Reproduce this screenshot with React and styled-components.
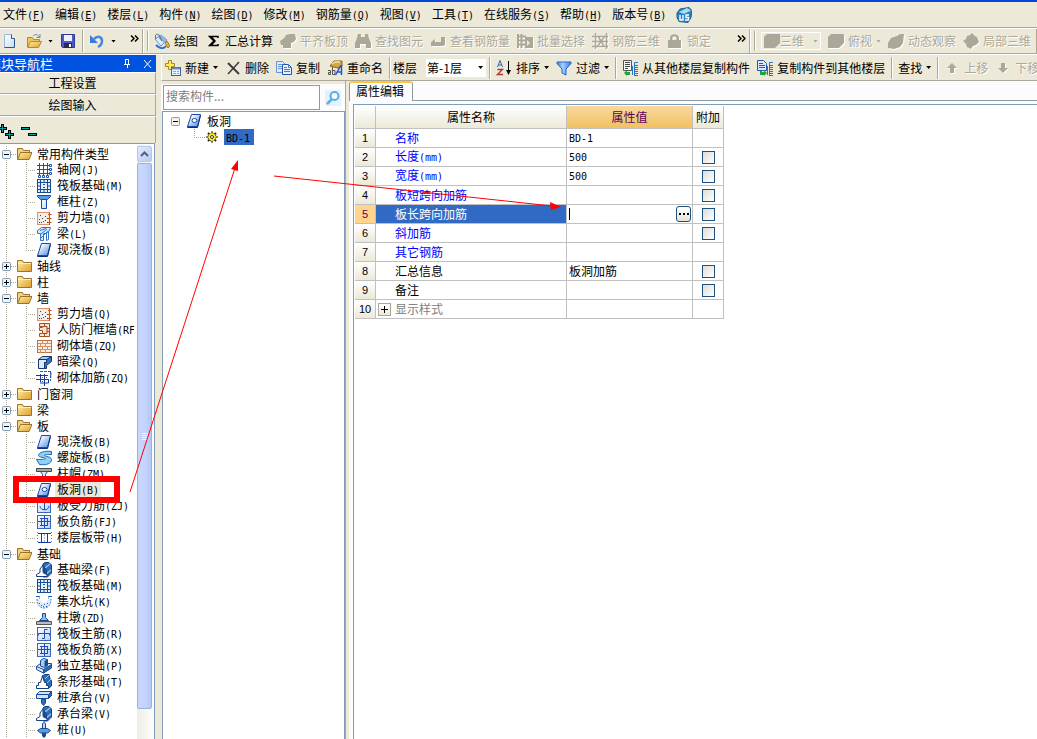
import React, { useState } from 'react';
import styled, { createGlobalStyle, css } from 'styled-components';

const GlobalStyle = createGlobalStyle`
  * {
    box-sizing: border-box;
  }

  body {
    margin: 0;
    overflow: hidden;
    background: #ece9d8;
  }

  body, button, input, select {
    font-family: 'Noto Sans CJK SC', 'Liberation Sans', sans-serif;
    font-size: 12px;
    line-height: 16px;
    color: #000;
  }

  button {
    margin: 0;
    padding: 0;
    border: 0;
    background: none;
  }
`;

const Page = styled.div`
  position: relative;
  display: flex;
  flex-direction: column;
  height: 100vh;
  overflow: hidden;
  border-top: 2px solid #0046d5;
`;

const Mono = styled.span`
  font-family: 'DejaVu Sans Mono', monospace;
  font-size: 10px;
`;

/* ---------- menu bar ---------- */

const MenuBar = styled.nav`
  display: flex;
  align-items: center;
  gap: 10px;
  height: 26px;
  padding-left: 3px;
  border-bottom: 1px solid #aca899;
`;

const MenuItem = styled.button`
  white-space: nowrap;
`;

/* ---------- toolbars ---------- */

const Rebar = styled.div`
  display: flex;
  height: 26px;
  border-top: 1px solid #fff;
  border-bottom: 1px solid #aca899;
`;

const Band = styled.div`
  display: flex;
  align-items: center;
  gap: 1px;
  flex: ${(p) => (p.$grow ? '1' : 'none')};
  min-width: ${(p) => p.$min || 0}px;
  overflow: hidden;
  border-left: 1px solid #fff;
  border-right: 1px solid #aca899;

  &:first-child {
    border-left: 0;
  }
`;

const Grip = styled.span`
  flex: none;
  width: 2px;
  height: 20px;
  margin: 0 1px 0 3px;
  border-left: 1px solid #aca899;
  border-right: 1px solid #fff;
`;

const Separator = styled.span`
  flex: none;
  width: 2px;
  height: 22px;
  margin: 0 1px 0 2px;
  border-left: 1px solid #aca899;
  border-right: 1px solid #fff;
`;

const ToolButton = styled.button`
  display: inline-flex;
  align-items: center;
  flex: none;
  gap: ${(p) => (p.$iconOnly ? 6 : 4)}px;
  height: 22px;
  padding: 0 3px;
  white-space: nowrap;

  &:disabled {
    color: #aca899;
    text-shadow: 1px 1px 0 #fff;
  }

  &:disabled svg {
    filter: drop-shadow(1px 1px 0 #fff);
  }
`;

const Chevron = styled.button`
  flex: none;
  align-self: flex-start;
  width: 9px;
  height: 16px;
  margin: 1px 3px 0 auto;
`;

const Arrow = styled.span`
  flex: none;
  width: 5px;
  height: 3px;
  background: ${(p) => (p.$muted ? '#aca899' : '#000')};
  clip-path: polygon(0 0, 100% 0, 50% 100%);
`;

const Svg = styled.svg`
  display: block;
  flex: none;
`;

const ViewPicker = styled.label`
  display: flex;
  align-items: center;
  flex: none;
  width: 60px;
  height: 18px;
  margin: 0 3px 0 3px;
  padding: 0 2px;
  border: 1px solid #fff;
`;

const PlainSelect = styled.select`
  flex: 1;
  min-width: 0;
  height: 16px;
  padding: 0;
  border: 0;
  background: transparent;
  appearance: none;
  opacity: 1;

  &:disabled {
    color: #aca899;
    text-shadow: 1px 1px 0 #fff;
  }
`;

const FloorLabel = styled.label`
  flex: none;
`;

const FloorBox = styled.span`
  display: flex;
  align-items: center;
  flex: none;
  width: 60px;
  height: 18px;
  margin: 0 0 0 8px;
  padding: 0 3px 0 1px;
  background: #fff;
`;

/* ---------- frame ---------- */

const Body = styled.div`
  display: flex;
  flex: 1;
  min-height: 0;
  border-top: 1px solid #fff;
`;

const NavPane = styled.aside`
  display: flex;
  flex-direction: column;
  flex: none;
  width: 168px;
  margin-left: -12px;
`;

const NavTitle = styled.header`
  display: flex;
  align-items: center;
  gap: 12px;
  height: 17px;
  padding-right: 4px;
  background: #0053e1;
  color: #fff;
  font-size: 13px;
  white-space: nowrap;
`;

const NavTitleText = styled.span`
  flex: 1;
`;

const NavButton = styled.button`
  height: 22px;
  padding-left: 2px;
  border: solid;
  border-width: 1px 1px 1px 0;
  border-color: #fff #aca899 #aca899 #fff;
`;

const NavTools = styled.div`
  display: flex;
  align-items: center;
  gap: 6px;
  height: 27px;
  padding: 2px 0 0 12px;
  border-top: 1px solid #fff;
  border-right: 1px solid #aca899;
`;

const NavTree = styled.div`
  display: flex;
  flex: 1;
  min-height: 0;
  margin-right: 1px;
  padding: 1px 1px 0 12px;
  border-top: 1px solid #7f9db9;
  border-right: 1px solid #7f9db9;
  background: #fff;
`;

const TreeRows = styled.ul`
  flex: 1;
  min-width: 0;
  margin: 0 3px 0 0;
  padding: 1px 0 0;
  overflow: hidden;
  list-style: none;
`;

const dotsDown = 'repeating-linear-gradient(180deg, #aca899 0 1px, transparent 1px 2px)';
const dotsRight = 'repeating-linear-gradient(90deg, #aca899 0 1px, transparent 1px 2px)';

const GroupRow = styled.li`
  display: flex;
  align-items: center;
  height: 16px;
  padding-left: 2px;
  white-space: nowrap;
  background:
    ${dotsDown} 6px 0 / 1px 16px no-repeat,
    ${dotsRight} 11px 8px / 6px 1px no-repeat;
`;

const LeafRow = styled.li`
  display: flex;
  align-items: center;
  height: 16px;
  padding-left: 36px;
  white-space: nowrap;
  background:
    ${dotsDown} 6px 0 / 1px 16px no-repeat,
    ${dotsDown} 26px 0 / 1px ${(p) => (p.$last ? 8 : 16)}px no-repeat,
    ${dotsRight} 26px 8px / 10px 1px no-repeat;
`;

const Expander = styled.button`
  display: block;
  flex: none;
  width: 9px;
  height: 9px;
  margin-right: 5px;
`;

const RowLabel = styled.span`
  margin-left: 3px;
  padding: 0 2px;
  background: ${(p) => (p.$selected ? '#ece9d8' : 'transparent')};
`;

const ScrollBar = styled.div`
  display: flex;
  flex-direction: column;
  flex: none;
  width: 16px;
  background: linear-gradient(90deg, #eeede5, #fefefb);
`;

const ScrollButton = styled.button`
  display: flex;
  align-items: center;
  justify-content: center;
  height: 16px;
  margin: 1px 1px 1px 0;
  border: 1px solid #b4c8f6;
  border-radius: 2px;
  background: linear-gradient(135deg, #e1eafe, #b9cbf3);
`;

const ScrollThumb = styled.div`
  display: flex;
  flex-direction: column;
  align-items: center;
  justify-content: center;
  gap: 1px;
  height: 92%;
  margin-right: 1px;
  border: 1px solid #98b0e8;
  border-radius: 2px;
  background: linear-gradient(90deg, #c9d8fc, #c2d3fd 60%, #b5c7f3);
`;

const ThumbLine = styled.span`
  width: 6px;
  height: 1px;
  background: #eef4fe;
`;

/* ---------- work area ---------- */

const Work = styled.main`
  display: flex;
  flex-direction: column;
  flex: 1;
  min-width: 0;
  margin-left: 5px;
`;

const ActionBar = styled.div`
  display: flex;
  align-items: center;
  gap: 1px;
  height: 26px;
  overflow: hidden;
  border-left: 1px solid #fff;
  border-bottom: 1px solid #aca899;
`;

const Panels = styled.div`
  display: flex;
  flex: 1;
  min-height: 0;
`;

const ListPane = styled.section`
  display: flex;
  flex-direction: column;
  flex: none;
  width: 185px;
  padding-top: 3px;
  border-right: 1px solid #aca899;
`;

const SearchRow = styled.form`
  display: flex;
  align-items: center;
  height: 27px;
  padding-left: 2px;
  background: #fcfcfe;
`;

const SearchInput = styled.input`
  width: 157px;
  height: 25px;
  padding: 0 2px 4px;
  border: 1px solid #7f9db9;
  background: #fff;

  &::placeholder {
    color: #808080;
    opacity: 1;
  }
`;

const SearchButton = styled.button`
  margin-left: 5px;
`;

const PartTree = styled.ul`
  flex: 1;
  margin: 0 0 0 1px;
  padding: 1px 0 0 8px;
  border: 1px solid #7f9db9;
  border-bottom: 0;
  background: #fff;
  list-style: none;
`;

const PartRoot = styled.li`
  display: flex;
  align-items: center;
  height: 16px;
`;

const PartIcon = styled.span`
  margin-left: 1px;
`;

const PartChild = styled.li`
  display: flex;
  align-items: center;
  height: 16px;
  padding-left: 33px;
  background:
    ${dotsDown} 23px 0 / 1px 8px no-repeat,
    ${dotsRight} 23px 8px / 11px 1px no-repeat;
`;

const PartLabel = styled.span`
  height: 16px;
  margin-left: 4px;
  padding: 0 4px 0 2px;
  background: #316ac5;
`;

const EditPane = styled.section`
  display: flex;
  flex-direction: column;
  flex: 1;
  min-width: 0;
  margin-left: 3px;
  background: #fcfcfe;
`;

const TabStrip = styled.div`
  display: flex;
  height: 20px;
  border-bottom: 1px solid #919b9c;
`;

const Tab = styled.button`
  height: 20px;
  padding: 0 8px 2px 6px;
  border: 1px solid #919b9c;
  border-top: 2px solid #ffc73c;
  border-bottom: 0;
  border-radius: 3px 3px 0 0;
  background: #fcfcfe;
`;

const GridFrame = styled.div`
  flex: 1;
  margin: 3px 0 0 4px;
  padding: 1px 0 0 1px;
  border-top: 1px solid #7f9db9;
  border-left: 1px solid #7f9db9;
  background: #fff;
`;

const Grid = styled.table`
  width: 369px;
  table-layout: fixed;
  border-collapse: separate;
  border-spacing: 0;
`;

const cell = css`
  height: 19px;
  padding: 0;
  border-right: 1px solid #c0c0c0;
  border-bottom: 1px solid #c0c0c0;
  font-weight: normal;
  line-height: 16px;
  white-space: nowrap;
`;

const HeadCell = styled.th`
  ${cell}
  width: ${(p) => p.$width}px;
  height: 23px;
  background: ${(p) => (p.$active
    ? 'linear-gradient(#f9d99f, #f1c15f)'
    : 'linear-gradient(#fff, #ece9d8)')};
  color: ${(p) => (p.$active ? '#5c0058' : '#000')};
`;

const NumberCell = styled.th`
  ${cell}
  background: ${(p) => (p.$active ? '#ffd58d' : 'linear-gradient(#fff, #ece9d8)')};
  color: ${(p) => (p.$active ? '#5c0058' : '#000')};
  font-family: 'Liberation Sans', sans-serif;
  font-size: 11px;
`;

const NameCell = styled.td`
  ${cell}
  padding-left: ${(p) => (p.$nested ? 2 : 19)}px;
  background: ${(p) => (p.$active ? '#316ac5' : '#fff')};
  color: ${(p) => p.$color};
`;

const NameInner = styled.div`
  display: flex;
  align-items: center;
  gap: 4px;
`;

const ValueCell = styled.td`
  ${cell}
  padding-left: 2px;
`;

const CheckCell = styled.td`
  ${cell}
  text-align: center;
`;

const Editor = styled.div`
  display: flex;
  align-items: center;
  height: 18px;
  padding-right: 1px;
`;

const Caret = styled.span`
  width: 1px;
  height: 12px;
  background: #000;
`;

const ValueInput = styled.input`
  flex: 1;
  min-width: 0;
  height: 16px;
  padding: 0;
  border: 0;
  outline: 0;
`;

const MoreButton = styled.button`
  display: flex;
  align-items: center;
  justify-content: center;
  gap: 2px;
  width: 15px;
  height: 16px;
  border: 1px solid #1c5180;
  border-radius: 3px;
  background: linear-gradient(#fff, #e6e3da);
`;

const Dot = styled.span`
  width: 2px;
  height: 2px;
  background: #000;
`;

const Check = styled.input`
  display: block;
  width: 13px;
  height: 13px;
  margin: 0 auto;
  appearance: none;
  border: 1px solid #1c5180;
  background: linear-gradient(135deg, #dcdcd7, #fff);

  &:checked {
    background: #1c5180;
  }
`;

const GridExpander = styled.button`
  display: flex;
  width: 13px;
  height: 13px;
  border: 1px solid #aca899;
  background: linear-gradient(#fff, #ece9d8);
`;

/* ---------- annotation ---------- */

const Markup = styled.svg`
  position: absolute;
  top: -2px;
  left: 0;
  pointer-events: none;
`;

/* ---------- icons ---------- */

const blue = '#1c4fb0';
const navy = '#174c94';
const grey = '#aca899';

const slab = (
  <>
    <path d="M5.500 1.500h9l-3 12h-10z" fill="url(#slabFill)" stroke="#1b48a8" />
    <path d="M1.500 13.500v1h10l3-12" stroke="#0d2c86" />
  </>
);

const beam = (
  <>
    <path d="M7 2l2-1.500h4L15.500 3v8l-4 4H7z" fill="#2e6db5" stroke="#123f80" />
    <path d="M9 6l5-4M10 12l5-4" stroke="#8fc2ee" strokeWidth="1.500" />
    <path d="M.5 14.500v-2l3.500-2V7l3-4v7.500l4 2v2z" fill="#fff" stroke="#123f80" />
    <path d="M7 3v8l4 2V8z" fill="#174c94" />
  </>
);

const hatch = <rect x="1.500" y="1.500" width="13" height="13" fill="url(#cellFill)" stroke="#3a66c0" />;

const floorStack = (
  <path
    d="M16 2.500h-3.500v13M12 5.500h4M12 7.500h4M12 9.500h4M12 11.500h4M12 13.500h4M12 15.500h4M10.500 6v9"
    stroke="#2a72c2"
  />
);

const icons = {
  logo: (
    <>
      <path d="M1 6l3-4 9-1.500 3 3-1 7-3 5-9-1-2-4z" fill="#2b83bd" stroke="#1d5e94" />
      <path d="M3 5l8-4 4 2.500-7 3.500z" fill="#a5dbf3" />
      <path d="M4 8v5h3V8M13 8h-3v2.500h2.500V13H9" stroke="#fff" strokeWidth="1.400" />
    </>
  ),
  file: (
    <>
      <path d="M1.500 1.500h7l3 4v9h-10z" fill="url(#paper)" />
      <path d="M1.500 15V1.500h7" stroke="#9db8d6" />
      <path d="M8.500 1.500v4h3v9h-10" stroke="#2f5688" />
    </>
  ),
  open: (
    <>
      <path d="M1.500 14V4.500h5l1 2h6v2" fill="#f0c55b" stroke="#b58a2f" />
      <path d="M1.500 14.500l3-6h11l-3 6z" fill="url(#gold)" stroke="#b58a2f" />
      <path d="M7 3c2-2 4-2 6.500 1M14 1v3.500h-3.500" stroke="#6d86a8" />
    </>
  ),
  save: (
    <>
      <path d="M1.500 1.500h13v13h-12l-1-1z" fill="#5059c8" stroke="#33378f" />
      <path d="M4 2h8v6H4z" fill="#eef1fb" />
      <path d="M4 10h8v5H4z" fill="#262a55" />
      <path d="M9 11h2v3H9z" fill="#fff" />
    </>
  ),
  undo: (
    <>
      <path d="M5 6c4-4 8-2 8 2 0 3-2 5-4 6" stroke="#4b86dc" strokeWidth="2.500" />
      <path d="M1 2v8h8z" fill="#3d7bd8" />
    </>
  ),
  paint: (
    <>
      <path d="M1 6l6-4 6 5-6 6z" fill="#e3eefb" stroke="#6d8fbd" />
      <path d="M7 2l6 5-3 3-6-5z" fill="#8fb6e8" />
      <path d="M2 6c-2-4 1-6 3-4l3 6" stroke="#58627a" />
      <path d="M2 12c4 4 8 4 10 1" stroke="#2671d9" strokeWidth="2" />
      <path d="M11 10l2-2 3 5-2 2z" fill="#e9b73c" stroke="#a3761c" />
    </>
  ),
  sigma: <path d="M13 5V3.500H4.500L9 8l-4.500 4.500H13V11M4 3.500h2l4 4.500-4 4.500" stroke="#000" strokeWidth="1.500" />,
  cube: <path d="M0 8l3-2 2-2 1-2 4-1h5l1 5-2 3-3 1v5H3v-3H1z" fill={grey} />,
  binocular: <path d="M3 1h3v3h4V1h3l1 4 2 5v5h-5v-4H5v4H0v-5l2-5z" fill={grey} />,
  rebarView: <path d="M1 9l4-3v3h6V4h4v8l-2 1H1z" fill={grey} />,
  batch: (
    <>
      <path d="M1 1v14M4.500 1v14M1 3.500h8M1 7.500h7M1 11.500h7" stroke={grey} strokeWidth="2" />
      <path d="M8 4h8v11H8z" fill={grey} />
      <path d="M10 7l3 3-3 3z" fill="#ece9d8" />
    </>
  ),
  mesh: <path d="M0 3.500h16M0 8.500h16M0 13.500h16M3.500 0v16M14.500 0v16M5 14L13 3M6 3l6 10" stroke={grey} strokeWidth="1.500" />,
  lock: <path d="M1 7h2V5c0-5 9-5 9 0v2h2v8H1zM5.500 7h4V5c0-2-4-2-4 0z" fill={grey} fillRule="evenodd" />,
  box3d: <path d="M0 4l3-3h13v9l-2 2-3 3H0z" fill={grey} />,
  orbit: <path d="M0 15v-5l3-5 6-2 3-2h4l-1 9-3 4-6 2z" fill={grey} />,
  part3d: <path d="M0 8l3-2 1-3 3-1 2-2 3 3 2 1 2 5-3 3-3 1-2 3-4-2-1-3z" fill={grey} />,
  create: (
    <>
      <path d="M3.500.5h3v3h3v3h-3v3h-3v-3h-3v-3h3z" fill="#ffea5c" stroke="#a58a22" />
      <rect x="6.500" y="7.500" width="9" height="8" fill="#eff5fd" stroke="#3d62a8" />
      <path d="M7 8.500h8" stroke="#5f8fdb" strokeWidth="2" />
      <path d="M8 11.500h3m1 0h2M8 13.500h3m1 0h2" stroke="#8aa6d0" />
    </>
  ),
  remove: (
    <>
      <path d="M3 3l11 11" stroke="#3a3a3a" strokeWidth="2" />
      <path d="M14 2L3 14" stroke="#3a3a3a" strokeWidth="1.500" />
    </>
  ),
  copy: (
    <>
      <path d="M.5 1.500h6l3 3v8h-9z" fill="#dfeafa" stroke="#6b92d2" />
      <path d="M2 4.500h4M2 6.500h5M2 8.500h5" stroke="#6b92d2" />
      <path d="M6.500 4.500h6l3 3v7h-9z" fill="#e8f1fd" stroke="#2456ad" />
      <path d="M12.500 4.500v3h3M8 7.500h3M8 9.500h6M8 11.500h6" stroke="#4a77c4" />
    </>
  ),
  rename: (
    <>
      <path d="M3 6l4-5h8v5l-4 2z" fill="#d9a63c" stroke="#86601a" />
      <path d="M5 4l3-2h5" stroke="#fbe39a" strokeWidth="1.500" />
      <path d="M1 10.500h2.500v4H1.500v-2h2M5.500 7v7.500h2.500v-4H5.500" stroke="#555" />
      <path d="M8.500 15l5-9h1v9M10.500 12h4" stroke="#2155c8" strokeWidth="1.500" />
    </>
  ),
  sort: (
    <>
      <path d="M1.500 7l2.500-6.500L6.500 7M2.500 5h3" stroke="#2e62b8" />
      <path d="M1.500 9.500h5l-5 5h5.500" stroke="#b03434" strokeWidth="1.300" />
      <path d="M12.500 1v12" stroke="#000" />
      <path d="M10 10h5l-2.500 5z" fill="#000" />
    </>
  ),
  filter: <path d="M1 2h14v1.500L10 9v6l-4-2V9L1 3.500z" fill="url(#funnel)" stroke="#2465cf" />,
  copyFrom: (
    <>
      <path d="M1.500.5h8v10h-8z" fill="#f4f4f4" stroke="#555" />
      <path d="M3 2.500h5M3 4.500h5M3 6.500h5M3 8.500h3" stroke="#444" />
      <path d="M2 13l3-3v2h3v3H5v1z" fill="#1fa33b" />
      {floorStack}
    </>
  ),
  copyTo: (
    <>
      <path d="M.5.5h6l3 3v7h-9z" fill="#dcebfc" stroke="#2456ad" />
      <path d="M2 3.500h4M2 5.500h6M2 7.500h6" stroke="#2456ad" />
      <path d="M3 11v4h4v1l3-3-3-3v2H5v-1z" fill="#1fa33b" />
      {floorStack}
    </>
  ),
  up: <path d="M8 3l5 5h-3v5H6V8H3z" fill={grey} />,
  down: <path d="M8 13l5-5h-3V3H6v5H3z" fill={grey} />,
  search: (
    <>
      <rect width="16" height="16" fill="#e3f2fc" />
      <circle cx="9.500" cy="6" r="4" fill="#f5fbff" stroke="#5aaee6" strokeWidth="2" />
      <path d="M6.500 9.500L2 14" stroke="#5aaee6" strokeWidth="2.500" />
    </>
  ),
  folder: (
    <>
      <path d="M1.500 13.500v-11h5l1 2h8v9z" fill="url(#gold)" stroke="#9a742a" />
      <path d="M2 5.500h13" stroke="#fff1b8" />
    </>
  ),
  folderOpen: (
    <>
      <path d="M1.500 13.500v-11h5l1 2h6v2" fill="#f3d27a" stroke="#9a742a" />
      <path d="M1.500 13.500l3-7h11.500l-3 7z" fill="url(#gold)" stroke="#9a742a" />
    </>
  ),
  axis: (
    <>
      <path d="M1 3.500h12M1 7.500h12M1 11.500h12M3.500 1v12M7.500 1v12M11.500 1v12" stroke={blue} />
      <path d="M13.500 2.500h2v2h-2zM13.500 6.500h2v2h-2zM13.500 10.500h2v2h-2zM2.500 13.500h2v2h-2zM6.500 13.500h2v2h-2zM10.500 13.500h2v2h-2z" fill="#fff" stroke={blue} />
    </>
  ),
  raft: (
    <>
      <rect x="1.500" y="1.500" width="13" height="13" fill="#e6f0fc" stroke={navy} />
      <rect x="4.500" y="4.500" width="7" height="7" stroke={navy} />
      <path d="M4.500 2v2M8 2v3M11.500 2v2M4.500 12v2M8 11v3M11.500 12v2M2 4.500h2M2 8h3M2 11.500h2M12 4.500h2M11 8h3M12 11.500h2M7 6.500h2M7 9.500h2" stroke={navy} />
    </>
  ),
  column: (
    <>
      <path d="M1.500 1.500h13v1l-3 3h-7l-3-3z" fill="#4f9fe4" stroke="#1b48a8" />
      <path d="M5.500 5.500h5v9h-5z" fill="url(#paper)" stroke="#1b48a8" />
    </>
  ),
  wall: (
    <>
      <rect x="1.500" y="2.500" width="12" height="12" fill="#f1eeea" stroke="#e0926c" />
      <path d="M4 5.500h1M6 8.500h1M9 6.500h1M3 9.500h1M9 10.500h1M5 12.500h1M11 12.500h1M7 11.500h1M11 8.500h1M3 12.500h1" stroke="#444" />
      <path d="M13.500 2v13M12 4.500h3.500M12 8.500h3.500M12 12.500h3.500" stroke="#b8561c" />
    </>
  ),
  girder: (
    <>
      <path d="M1.500 4.500l4-3h9l-1 3-4 3h-2v7h-3v-7h-3z" fill="#d7e8fb" stroke="#2f74c8" />
      <path d="M10.500 6.500l2-1v8l-2 1zM4 4.500l6-2M5 8l6-5M5 12l6-6" stroke="#2f74c8" />
    </>
  ),
  slab,
  gate: (
    <>
      <path d="M3.500 1.500h10v13h-10v-3h3v-3h-3v-3h3v-1h-3z" fill="#fbe0cf" stroke="#a04f20" />
      <path d="M7 4.500h4v7H7M8.500 2v2M11 6.500h2M11 9.500h2M8.500 12v2" stroke="#a04f20" />
    </>
  ),
  brick: (
    <>
      <rect x="1.500" y="2.500" width="14" height="12" fill="#fbeee4" stroke="#c07040" />
      <path d="M2 5.500h13M2 8.500h13M2 11.500h13M6.500 3v3M11.500 3v3M4.500 6v3M9.500 6v3M6.500 9v3M11.500 9v3M4.500 12v3M9.500 12v3" stroke="#d88e62" />
    </>
  ),
  hidden: (
    <>
      <path d="M2.500 5.500l4-3h9l-4 3z" fill="#a9cdf0" stroke="#16366e" />
      <path d="M2.500 5.500h8v3h-2v6h-6z" fill="#dce9f8" stroke="#16366e" />
      <path d="M10.500 5.500l5-3v5l-5 4v3h-2v-6h2z" fill="#3e70b8" stroke="#16366e" />
    </>
  ),
  tie: (
    <>
      <path d="M0 5.500h12M0 9.500h12M4.500 4v8M8.500 4v12M12.500 9v4H4" stroke="#1736a0" />
      <path d="M4 1.500h11v6M14.500 1v10" stroke="#1b5dc0" strokeDasharray="3 1" />
      <path d="M6 7.500h1M10 7.500h1M6 11.500h1" stroke="#c03030" />
    </>
  ),
  spiral: (
    <path
      d="M15.500 1.500c-7-1-13 1-13 4 0 2 7 2 7 3s-5 1-9 1l3 5c7 1 12-1 12-5 0-3-7-3-7-4s3-1 7-1z"
      fill="#8fd0f3"
      stroke="#1b68b8"
    />
  ),
  cap: (
    <>
      <path d="M.5 2.500h15v3h-15z" fill="#aaa" stroke="#444" />
      <path d="M4.500 5.500h7l-2 3v6h-3v-6z" fill="#d9e7f9" stroke="#23509c" />
    </>
  ),
  hole: (
    <>
      {slab}
      <ellipse cx="8.500" cy="7.500" rx="2.500" ry="2" fill="#fff" stroke="#1b48a8" />
    </>
  ),
  bearing: (
    <>
      {hatch}
      <path d="M3 4.500h10M8.500 3v9M4 8c0 5 9 5 9 0" stroke={blue} />
    </>
  ),
  negative: (
    <>
      {hatch}
      <path d="M2 7.500h12M4 4.500h8M4 11.500h8M5.500 4v8M11.500 4v8M8.500 2v12" stroke={blue} />
    </>
  ),
  strip: (
    <>
      <path d="M1.500 2v12M15.500 2v12" stroke="#4a78c8" strokeDasharray="1 2" />
      <path d="M2 3.500h13M2 12.500h13M5.500 4v8M11.500 4v8" stroke="#1736a0" />
      <path d="M8.500 4v8" stroke="#8fb4ea" strokeDasharray="2 1" />
    </>
  ),
  beam,
  pit: (
    <>
      <path d="M0 2.500h3.500v4h2v2h5v-2h2v-4H16" stroke="#1b5dc0" />
      <path d="M1 5c0 6 3 9 7 9s7-3 7-9" fill="#dceafa" stroke="#4f8ad8" strokeDasharray="2 1" />
      <path d="M3.500 3v3.500h2v2h5v-2h2V3z" fill="#fff" />
      <path d="M3 9.500h1M5 11.500h1M8 10.500h1M11 9.500h1M7 12.500h1M10 12.500h1" stroke="#1b5dc0" />
    </>
  ),
  pier: (
    <>
      <path d="M.5 11.500h15v3h-15z" fill="#bbb" stroke="#555" />
      <path d="M3.500 10.500l3-3v-4h3v4l3 3z" fill="#8dbcf0" stroke={navy} />
      <path d="M4 10.500h8" stroke={navy} />
    </>
  ),
  mainBar: (
    <>
      {hatch}
      <path d="M2.500 9.500v-2h11v2M8.500 3.500v9M6 12.500h2.500M8.500 3.500h3" stroke={blue} />
    </>
  ),
  footing: (
    <>
      <path d="M.5 8.500l4-3 11 0v4l-8 5.500-7-3.500z" fill="#dce9f8" stroke={navy} />
      <path d="M7.500 15v-3.500l8-5V10z" fill="#2e6db5" stroke={navy} />
      <path d="M.5 8.500l7 3" stroke={navy} />
      <path d="M4.500 2.500l3-2 4 1v6l-3 2-4-1.500z" fill="#a9cdf0" stroke={navy} />
      <path d="M8.500 3v6l3-1.500V1.500z" fill="#174c94" />
    </>
  ),
  stripFooting: (
    <>
      <path d="M6 2l3-1.500h4l1 4 1.500 2V12l-3 2.500z" fill="#2e6db5" stroke="#123f80" />
      <path d="M9 5l4-4M11 9l4-4" stroke="#8fc2ee" />
      <path d="M.5 14.500v-3h2v-3h2l2-6.500 2 6.500h2v3h2v3z" fill="#fff" stroke="#123f80" />
    </>
  ),
  pileCap: (
    <>
      <path d="M.5 4.500l3-3h12v4l-3 3H.5z" fill="#cfe2f8" stroke={navy} />
      <path d="M12.500 4.500v4l3-3v-4z" fill="#2e6db5" stroke={navy} />
      <path d="M1 4.500h11" stroke={navy} />
      <path d="M5.500 9h4v4l-2 2.500-2-2.500z" fill="#2e6db5" stroke={navy} />
    </>
  ),
  pile: (
    <>
      <path d="M6.500 1.500l1.500-1 1.500 1v6h-3z" fill="#b9d8f8" stroke={navy} />
      <path d="M1.500 8.500l3-2h7l3 2-3 2.500h-7z" fill="#5c9bdf" stroke={navy} />
      <path d="M6 11h4v3l-2 2-2-2z" fill={navy} />
    </>
  ),
  gear: (
    <>
      <path d="M8 2.500v11M2.500 8h11M4 4l8 8M12 4l-8 8" stroke="#222" strokeWidth="2" />
      <circle cx="8" cy="8" r="4" fill="#ffee22" stroke="#222" strokeDasharray="1.500 1" />
      <path d="M8 3v10M3 8h10" stroke="#f5df10" />
      <circle cx="8" cy="8" r="1.500" fill="#fff" stroke="#333" />
    </>
  ),
};

function Icon({ name }) {
  return (
    <Svg width="16" height="16" viewBox="0 0 16 16" fill="none" aria-hidden="true">
      {icons[name]}
    </Svg>
  );
}

function IconFills() {
  return (
    <defs>
      <linearGradient id="slabFill" x1="0" y1="0" x2="1" y2="1">
        <stop offset="0.200" stopColor="#fff" />
        <stop offset="1" stopColor="#3f86e0" />
      </linearGradient>
      <linearGradient id="cellFill" x1="0" y1="0" x2="1" y2="1">
        <stop offset="0" stopColor="#fff" />
        <stop offset="1" stopColor="#b9d2f8" />
      </linearGradient>
      <linearGradient id="paper" x1="0" y1="0" x2="1" y2="1">
        <stop offset="0" stopColor="#fff" />
        <stop offset="1" stopColor="#c4dcf2" />
      </linearGradient>
      <linearGradient id="gold" x1="0" y1="0" x2="1" y2="1">
        <stop offset="0" stopColor="#fff0a8" />
        <stop offset="1" stopColor="#dd9f2e" />
      </linearGradient>
      <linearGradient id="funnel">
        <stop offset="0" stopColor="#2f79e6" />
        <stop offset="0.400" stopColor="#a9d0fb" />
        <stop offset="1" stopColor="#2f79e6" />
      </linearGradient>
    </defs>
  );
}

function PlusMinus({ open }) {
  return (
    <Svg width="9" height="9" viewBox="0 0 9 9" aria-hidden="true">
      <rect x="0.500" y="0.500" width="8" height="8" rx="1" fill="#f4f2ea" stroke="#7f9db9" />
      <path d={open ? 'M2 4.500h5' : 'M2 4.500h5M4.500 2v5'} stroke="#000" />
    </Svg>
  );
}

/* ---------- data ---------- */

const menus = [
  ['文件', 'F'], ['编辑', 'E'], ['楼层', 'L'], ['构件', 'N'], ['绘图', 'D'], ['修改', 'M'],
  ['钢筋量', 'Q'], ['视图', 'V'], ['工具', 'T'], ['在线服务', 'S'], ['帮助', 'H'], ['版本号', 'B'],
];

const groups = [
  {
    name: '常用构件类型',
    items: [
      ['axis', '轴网', 'J'], ['raft', '筏板基础', 'M'], ['column', '框柱', 'Z'],
      ['wall', '剪力墙', 'Q'], ['girder', '梁', 'L'], ['slab', '现浇板', 'B'],
    ],
  },
  { name: '轴线' },
  { name: '柱' },
  {
    name: '墙',
    items: [
      ['wall', '剪力墙', 'Q'], ['gate', '人防门框墙', 'RF'], ['brick', '砌体墙', 'ZQ'],
      ['hidden', '暗梁', 'Q'], ['tie', '砌体加筋', 'ZQ'],
    ],
  },
  { name: '门窗洞' },
  { name: '梁' },
  {
    name: '板',
    items: [
      ['slab', '现浇板', 'B'], ['spiral', '螺旋板', 'B'], ['cap', '柱帽', 'ZM'], ['hole', '板洞', 'B'],
      ['bearing', '板受力筋', 'ZJ'], ['negative', '板负筋', 'FJ'], ['strip', '楼层板带', 'H'],
    ],
  },
  {
    name: '基础',
    more: true,
    items: [
      ['beam', '基础梁', 'F'], ['raft', '筏板基础', 'M'], ['pit', '集水坑', 'K'], ['pier', '柱墩', 'ZD'],
      ['mainBar', '筏板主筋', 'R'], ['negative', '筏板负筋', 'X'], ['footing', '独立基础', 'P'],
      ['stripFooting', '条形基础', 'T'], ['pileCap', '桩承台', 'V'], ['beam', '承台梁', 'V'], ['pile', '桩', 'U'],
    ],
  },
];

const properties = [
  { name: '名称', value: 'BD-1', color: '#00f', mono: true },
  { name: '长度', unit: '(mm)', value: '500', color: '#00f', mono: true, check: true },
  { name: '宽度', unit: '(mm)', value: '500', color: '#00f', mono: true, check: true },
  { name: '板短跨向加筋', color: '#00f', check: true },
  { name: '板长跨向加筋', color: '#fff', check: true, active: true },
  { name: '斜加筋', color: '#00f', check: true },
  { name: '其它钢筋', color: '#00f' },
  { name: '汇总信息', value: '板洞加筋', color: '#000', check: true },
  { name: '备注', color: '#000', check: true },
  { name: '显示样式', color: '#808080', nested: true },
];

/* ---------- pieces ---------- */

function Tool({ icon, label, title, menu, disabled }) {
  return (
    <ToolButton type="button" disabled={disabled} title={title} aria-label={label || title} $iconOnly={!label}>
      {icon && <Icon name={icon} />}
      {label}
      {menu && <Arrow $muted={disabled} />}
    </ToolButton>
  );
}

function Overflow() {
  return (
    <Chevron type="button" aria-label="更多">
      <Svg width="9" height="7" viewBox="0 0 9 7" fill="none" aria-hidden="true">
        <path d="M1 .5l3 3-3 3M5 .5l3 3-3 3" stroke="#000" strokeWidth="1.500" />
      </Svg>
    </Chevron>
  );
}

function MainToolbar() {
  return (
    <Rebar>
      <Band $min={143}>
        <Tool icon="file" title="新建工程" />
        <Tool icon="open" title="打开" menu />
        <Tool icon="save" title="保存" />
        <Separator />
        <Tool icon="undo" title="撤销" menu />
        <Overflow />
      </Band>
      <Band $min={607}>
        <Grip />
        <Tool icon="paint" label="绘图" />
        <Tool icon="sigma" label="汇总计算" />
        <Tool icon="cube" label="平齐板顶" disabled />
        <Tool icon="binocular" label="查找图元" disabled />
        <Tool icon="rebarView" label="查看钢筋量" disabled />
        <Tool icon="batch" label="批量选择" disabled />
        <Tool icon="mesh" label="钢筋三维" disabled />
        <Tool icon="lock" label="锁定" disabled />
        <Overflow />
      </Band>
      <Band $grow>
        <Grip />
        <ViewPicker>
          <Icon name="box3d" />
          <PlainSelect disabled aria-label="视图模式">
            <option>三维</option>
          </PlainSelect>
          <Arrow $muted />
        </ViewPicker>
        <Tool icon="box3d" label="俯视" menu disabled />
        <Tool icon="orbit" label="动态观察" disabled />
        <Tool icon="part3d" label="局部三维" disabled />
        <Separator />
      </Band>
    </Rebar>
  );
}

function ComponentToolbar() {
  return (
    <ActionBar>
      <Tool icon="create" label="新建" menu />
      <Tool icon="remove" label="删除" />
      <Tool icon="copy" label="复制" />
      <Tool icon="rename" label="重命名" />
      <Separator />
      <FloorLabel htmlFor="floor">楼层</FloorLabel>
      <FloorBox>
        <PlainSelect id="floor">
          <option>第-1层</option>
        </PlainSelect>
        <Arrow />
      </FloorBox>
      <Separator />
      <Tool icon="sort" label="排序" menu />
      <Tool icon="filter" label="过滤" menu />
      <Separator />
      <Tool icon="copyFrom" label="从其他楼层复制构件" />
      <Tool icon="copyTo" label="复制构件到其他楼层" />
      <Separator />
      <Tool label="查找" menu />
      <Separator />
      <Tool icon="up" label="上移" disabled />
      <Tool icon="down" label="下移" disabled />
    </ActionBar>
  );
}

function Navigator() {
  return (
    <NavPane>
      <NavTitle>
        <NavTitleText>模块导航栏</NavTitleText>
        <button type="button" aria-label="固定">
          <Svg width="8" height="9" viewBox="0 0 8 9" fill="none" aria-hidden="true">
            <path d="M2.500 5V.5h3V5M1 5.500h6M4.500 5v4M5.500 1v4" stroke="#fff" />
          </Svg>
        </button>
        <button type="button" aria-label="关闭">
          <Svg width="9" height="8" viewBox="0 0 9 8" fill="none" aria-hidden="true">
            <path d="M1 0l7 8M8 0L1 8" stroke="#fff" />
          </Svg>
        </button>
      </NavTitle>
      <NavButton type="button">工程设置</NavButton>
      <NavButton type="button">绘图输入</NavButton>
      <NavTools>
        <button type="button" aria-label="全部展开">
          <Svg width="15" height="15" viewBox="0 0 15 15" fill="none" aria-hidden="true">
            <path d="M0 4.500h7M2.500 0v9M5 10.500h9M9.500 6v9" stroke="#000" strokeWidth="3" />
            <path d="M0 4.500h6M2.500 1v7M6 10.500h7M9.500 7v7" stroke="#00a0a0" />
          </Svg>
        </button>
        <button type="button" aria-label="全部折叠">
          <Svg width="16" height="10" viewBox="0 0 16 10" fill="none" aria-hidden="true">
            <path d="M0 2.500h9M7 8.500h9" stroke="#000" strokeWidth="3" />
            <path d="M1 2.500h7M8 8.500h7" stroke="#00a0a0" />
          </Svg>
        </button>
      </NavTools>
      <NavTree>
        <TreeRows>
          {groups.map((group) => (
            <React.Fragment key={group.name}>
              <GroupRow>
                <Expander type="button" aria-label={group.name}>
                  <PlusMinus open={!!group.items} />
                </Expander>
                <Icon name={group.items ? 'folderOpen' : 'folder'} />
                <RowLabel>{group.name}</RowLabel>
              </GroupRow>
              {(group.items || []).map(([icon, name, hotkey], i) => (
                <LeafRow key={name} $last={i === group.items.length - 1 && !group.more}>
                  <Icon name={icon} />
                  <RowLabel $selected={name === '板洞'}>
                    {name}
                    <Mono>({hotkey})</Mono>
                  </RowLabel>
                </LeafRow>
              ))}
            </React.Fragment>
          ))}
        </TreeRows>
        <ScrollBar>
          <ScrollButton type="button" aria-label="向上滚动">
            <Svg width="9" height="6" viewBox="0 0 9 6" fill="none" aria-hidden="true">
              <path d="M1 5l3.500-3.500L8 5" stroke="#4d6185" strokeWidth="2" />
            </Svg>
          </ScrollButton>
          <ScrollThumb>
            <ThumbLine />
            <ThumbLine />
            <ThumbLine />
            <ThumbLine />
          </ScrollThumb>
        </ScrollBar>
      </NavTree>
    </NavPane>
  );
}

function PropertyGrid() {
  const [checked, setChecked] = useState({});

  const toggle = (name) => {
    setChecked({ ...checked, [name]: !checked[name] });
  };

  return (
    <Grid>
      <thead>
        <tr>
          <HeadCell $width={21} />
          <HeadCell $width={191}>属性名称</HeadCell>
          <HeadCell $width={126} $active>属性值</HeadCell>
          <HeadCell $width={31}>附加</HeadCell>
        </tr>
      </thead>
      <tbody>
        {properties.map((row, i) => (
          <tr key={row.name}>
            <NumberCell $active={row.active}>{i + 1}</NumberCell>
            <NameCell $active={row.active} $color={row.color} $nested={row.nested}>
              {row.nested ? (
                <NameInner>
                  <GridExpander type="button" aria-label={`展开${row.name}`}>
                    <Svg width="11" height="11" viewBox="0 0 11 11" aria-hidden="true">
                      <path d="M2 5.500h7M5.500 2v7" stroke="#000" />
                    </Svg>
                  </GridExpander>
                  {row.name}
                </NameInner>
              ) : (
                <>
                  {row.name}
                  {row.unit && <Mono>{row.unit}</Mono>}
                </>
              )}
            </NameCell>
            <ValueCell>
              {row.active ? (
                <Editor>
                  <Caret />
                  <ValueInput type="text" aria-label={row.name} />
                  <MoreButton type="button" aria-label="更多选项">
                    <Dot />
                    <Dot />
                    <Dot />
                  </MoreButton>
                </Editor>
              ) : row.mono ? <Mono>{row.value}</Mono> : row.value}
            </ValueCell>
            <CheckCell>
              {row.check && (
                <Check
                  type="checkbox"
                  aria-label={`附加${row.name}`}
                  checked={!!checked[row.name]}
                  onChange={() => toggle(row.name)}
                />
              )}
            </CheckCell>
          </tr>
        ))}
      </tbody>
    </Grid>
  );
}

function App() {
  const [keyword, setKeyword] = useState('');

  return (
    <Page>
      <GlobalStyle />
      <MenuBar>
        {menus.map(([name, hotkey]) => (
          <MenuItem type="button" key={name}>
            {name}
            <Mono>(<u>{hotkey}</u>)</Mono>
          </MenuItem>
        ))}
        <Icon name="logo" />
      </MenuBar>
      <MainToolbar />
      <Body>
        <Navigator />
        <Work>
          <ComponentToolbar />
          <Panels>
            <ListPane>
              <SearchRow onSubmit={(e) => e.preventDefault()}>
                <SearchInput
                  type="text"
                  aria-label="搜索构件"
                  placeholder="搜索构件..."
                  value={keyword}
                  onChange={(e) => setKeyword(e.target.value)}
                />
                <SearchButton type="submit" aria-label="搜索">
                  <Icon name="search" />
                </SearchButton>
              </SearchRow>
              <PartTree>
                <PartRoot>
                  <Expander type="button" aria-label="板洞">
                    <PlusMinus open />
                  </Expander>
                  <PartIcon>
                    <Icon name="hole" />
                  </PartIcon>
                  <RowLabel>板洞</RowLabel>
                </PartRoot>
                <PartChild>
                  <Icon name="gear" />
                  <PartLabel><Mono>BD-1</Mono></PartLabel>
                </PartChild>
              </PartTree>
            </ListPane>
            <EditPane>
              <TabStrip>
                <Tab type="button">属性编辑</Tab>
              </TabStrip>
              <GridFrame>
                <PropertyGrid />
              </GridFrame>
            </EditPane>
          </Panels>
        </Work>
      </Body>
      <Markup width="570" height="510" viewBox="0 0 570 510" fill="none" aria-hidden="true">
        <IconFills />
        <rect x="16" y="479" width="101" height="21" stroke="#f00" strokeWidth="6" />
        <path d="M130 492L235 168M274 176l278 30" stroke="#f00" />
        <path d="M238 160l-7 9 7 2zM561 207l-11-5 1 8z" fill="#f00" />
      </Markup>
    </Page>
  );
}

export default App;
